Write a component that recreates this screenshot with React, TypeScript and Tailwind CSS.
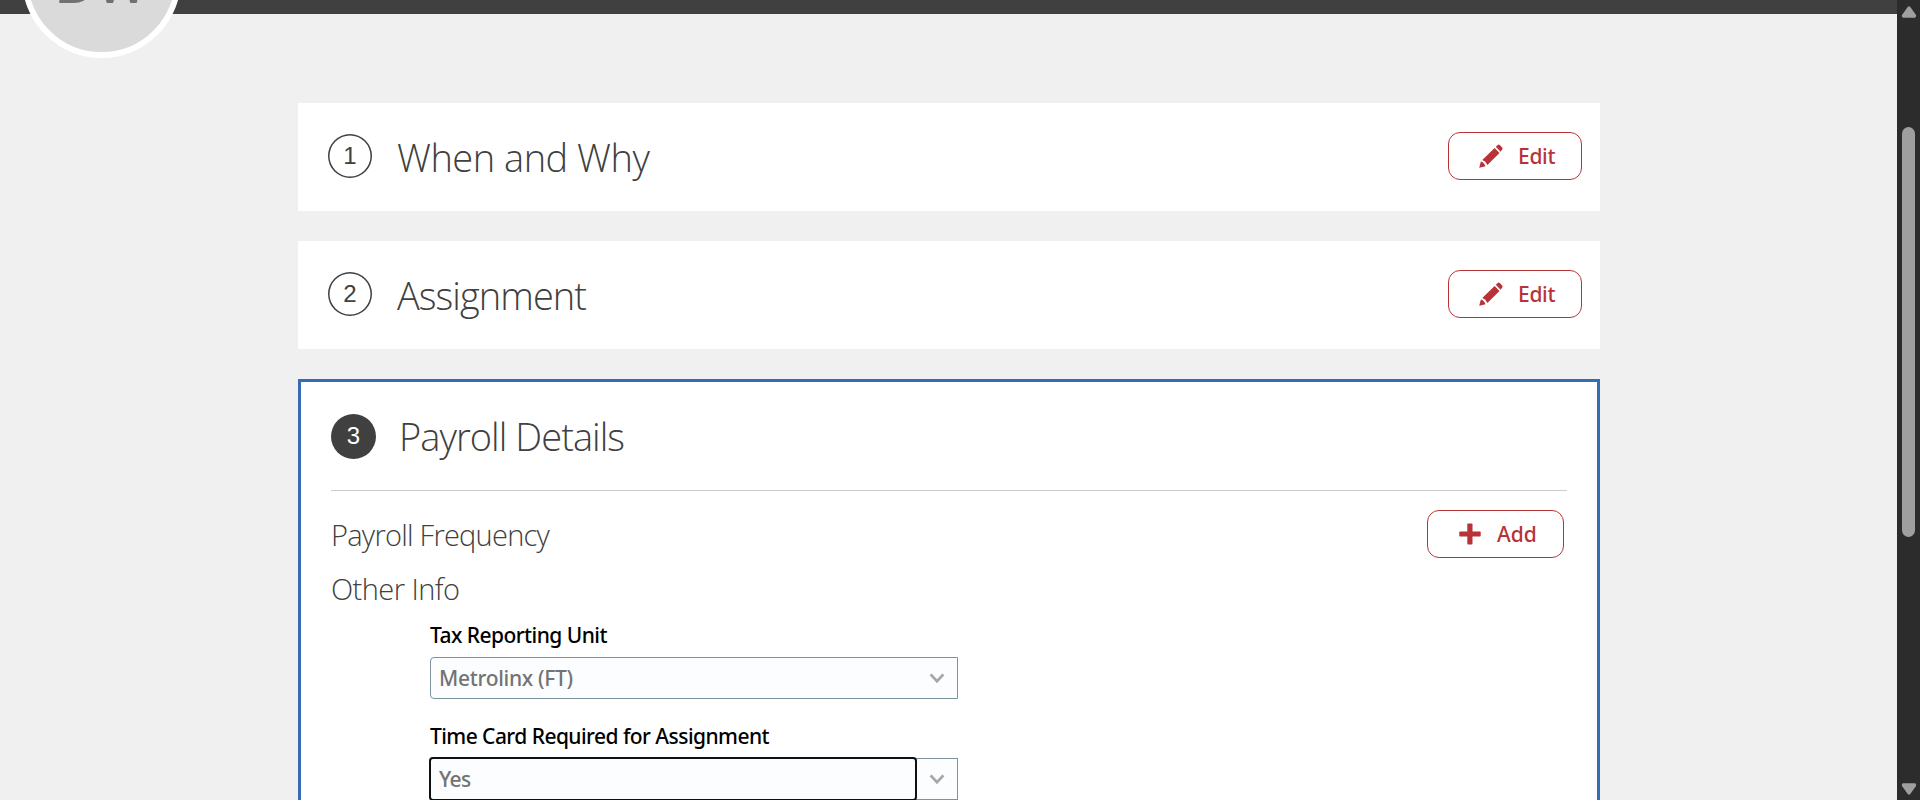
import type { ReactNode } from "react";

const sans = "font-['Open_Sans','Noto_Sans',sans-serif]";

function ActionButton({ label, icon, className }: { label: string; icon: ReactNode; className: string }) {
  return (
    <button
      className={`flex h-12 shrink-0 items-center rounded-xl border border-[#b83338] bg-white font-['Noto_Sans','Open_Sans',sans-serif] text-[21px] leading-none font-medium text-[#b83338] ${className}`}
    >
      {icon}
      <span className="whitespace-nowrap">{label}</span>
    </button>
  );
}

function Pencil() {
  return (
    <svg className="mr-[15px] h-6 w-6 shrink-0" viewBox="0 0 24 24" fill="#b83338">
      <path d="M0.2 23.8 L1.9 17.4 Q4.8 17.9 6.6 22.3 Z" />
      <path d="M3.3 16.1 L15.6 4.1 L20.5 9 L8.4 20.9 Q6.8 17.2 3.3 16.1 Z" />
      <path d="M16.8 2.8 L19 0.8 Q20 0.2 20.8 1 L23.2 3.6 Q24 4.6 23.2 5.6 L21.6 7.7 Z" />
    </svg>
  );
}

function Plus() {
  return (
    <svg className="mr-4 h-[22px] w-[22px] shrink-0" viewBox="0 0 22 22" fill="#b83338">
      <rect x="8.3" y="0.5" width="5.2" height="21" rx="0.8" />
      <rect x="0.3" y="8.4" width="21.4" height="5.2" rx="0.8" />
    </svg>
  );
}

function Chevron() {
  return (
    <svg className="h-3 w-4 shrink-0" viewBox="0 0 16 12" fill="none" stroke="#a5a8ab" strokeWidth="2.8">
      <path d="M1.6 2.4 L8 9.2 L14.4 2.4" />
    </svg>
  );
}

function CollapsedStep({ number, title, tracking }: { number: number; title: string; tracking: string }) {
  return (
    <section className="flex h-[108px] items-center bg-white pr-[18px] pb-[2px] pl-[30px]">
      <span className="mr-[25px] flex h-11 w-11 items-center justify-center rounded-full font-['Liberation_Sans',sans-serif] text-2xl leading-none text-[#404040] shadow-[inset_0_0_0_1.5px_#404040]">
        {number}
      </span>
      <h2 className={`flex-1 pt-[2px] text-[38px] leading-none font-light text-[#404040] ${tracking}`}>{title}</h2>
      <ActionButton label="Edit" icon={<Pencil />} className="w-[134px] pl-[30px] tracking-[-0.3px]" />
    </section>
  );
}

export default function App() {
  return (
    <div className={`flex h-[800px] w-[1920px] overflow-hidden bg-[#f0f0f0] ${sans}`}>
      <div className="relative h-full flex-1 overflow-hidden">
        <header className="h-[14px] bg-[#404040]" />
        <div className="absolute top-[-101px] left-[22px] flex h-[159px] w-[159px] items-center justify-center rounded-full border-[6px] border-white bg-[#dadada] font-['Liberation_Sans',sans-serif] text-[56px] leading-none text-[#717171]">
          <span className="pt-[10px]">DW</span>
        </div>
        <main className="mt-[89px] ml-[298px] flex w-[1302px] flex-col gap-[30px]">
          <CollapsedStep number={1} title="When and Why" tracking="tracking-[-0.5px]" />
          <CollapsedStep number={2} title="Assignment" tracking="tracking-[-0.95px]" />
          <section className="h-[500px] border-[3px] border-[#366bb8] bg-white px-[30px]">
            <div className="flex h-[109px] items-center border-b border-[#cccecd]">
              <span className="mr-[23px] flex h-[45px] w-[45px] items-center justify-center rounded-full bg-[#404040] font-['Liberation_Sans',sans-serif] text-2xl leading-none text-white">
                3
              </span>
              <h2 className="text-[38px] leading-none font-light tracking-[-0.95px] text-[#404040]">
                Payroll Details
              </h2>
            </div>
            <div className="mt-[19px] flex h-12 items-center justify-between pr-[3px]">
              <h3 className="text-[29px] leading-none font-light tracking-[-0.75px] text-[#404040]">
                Payroll Frequency
              </h3>
              <ActionButton label="Add" icon={<Plus />} className="w-[137px] pl-[31px]" />
            </div>
            <h3 className="mt-[16px] text-[29px] leading-[29px] font-light tracking-[-0.55px] text-[#404040]">
              Other Info
            </h3>
            <div className="ml-[99px] w-[528px] font-['Noto_Sans','Open_Sans',sans-serif] text-[21px] font-medium">
              <label className="mt-[20px] block h-[34px] leading-[24px] tracking-[-0.55px] text-black">
                Tax Reporting Unit
              </label>
              <div className="flex h-[42px] items-center justify-between rounded-l border border-[#7e939d] bg-[#fbfdfe] pr-3 pl-[8px]">
                <span className="leading-none tracking-[-0.3px] text-[#737373]">Metrolinx (FT)</span>
                <Chevron />
              </div>
              <label className="mt-[25px] block h-[34px] leading-[24px] tracking-[-0.55px] text-black">
                Time Card Required for Assignment
              </label>
              <div className="flex h-[42px] items-center border border-[#7e939d] bg-[#fbfdfe] pr-3">
                <div className="-ml-[2px] flex h-[44px] w-[488px] items-center rounded border-2 border-[#101010] bg-[#fbfdfe] pl-[8px]">
                  <span className="leading-none tracking-[-0.6px] text-[#737373]">Yes</span>
                </div>
                <span className="ml-auto">
                  <Chevron />
                </span>
              </div>
            </div>
          </section>
        </main>
      </div>
      <aside className="flex h-full w-[23px] shrink-0 flex-col items-center bg-[#2c2c2c] pt-[6px] pb-[5px]">
        <svg className="h-3 w-4" viewBox="0 0 16 12" fill="#9f9f9f">
          <path d="M6.7 1 Q8 -0.5 9.3 1 L15 9 Q15.6 11.5 13.8 11.7 H2.2 Q0.4 11.5 1 9 Z" />
        </svg>
        <div className="mt-[109px] h-[410px] w-[13px] rounded-full bg-[#9f9f9f]" />
        <svg className="mt-auto h-3 w-4" viewBox="0 0 16 12" fill="#9f9f9f">
          <path d="M6.7 11 Q8 12.5 9.3 11 L15 3 Q15.6 0.5 13.8 0.3 H2.2 Q0.4 0.5 1 3 Z" />
        </svg>
      </aside>
    </div>
  );
}
